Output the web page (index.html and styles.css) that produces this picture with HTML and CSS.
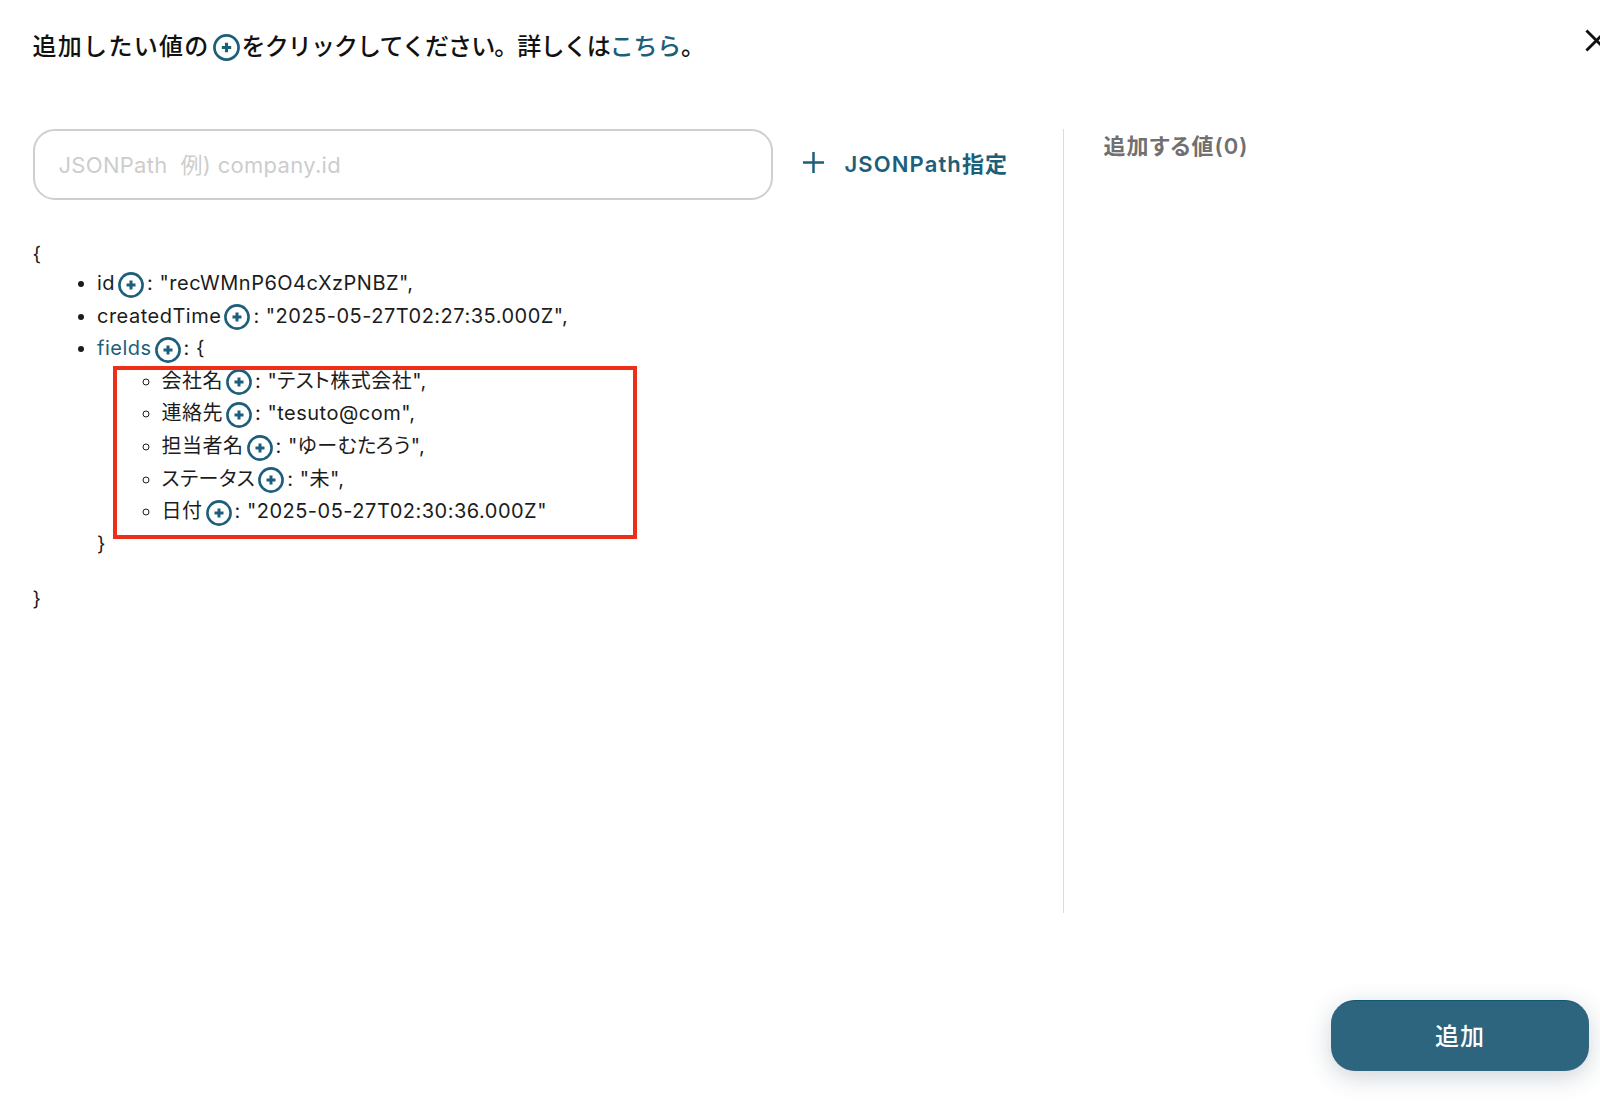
FILE: index.html
```html
<!DOCTYPE html>
<html lang="ja">
<head>
<meta charset="utf-8">
<title>JSONPath</title>
<link rel="stylesheet" href="styles.css">
</head>
<body>
<svg class="defs" width="0" height="0" aria-hidden="true"><symbol id="add" viewBox="0 0 26 26"><circle cx="13" cy="13" r="11.6" fill="none" stroke="currentColor" stroke-width="2.6"/><path d="M13 8.500v9M8.500 13h9" fill="none" stroke="currentColor" stroke-width="3"/></symbol></svg>
<div class="modal">
  <header class="head">
    <h1 class="title"><span class="title-lead">追加したい値の</span><svg class="add add-title"><use href="#add"/></svg><span class="title-rest">をクリックしてください。詳しくは<a class="link title-link" href="#">こちら</a>。</span></h1>
    <svg class="close" viewBox="0 0 24 24"><path d="M1.500 1.500L22.500 22.500M22.500 1.500L1.500 22.500" fill="none" stroke="#111" stroke-width="3"/></svg>
  </header>
  <main class="body">
    <section class="left">
      <div class="search">
        <div class="input">JSONPath&nbsp; 例) company.id</div>
        <a class="path-btn" href="#"><svg class="plus" viewBox="0 0 24 24"><path d="M12 1v22M1 12h22" fill="none" stroke="currentColor" stroke-width="2.600"/></svg><span>JSONPath指定</span></a>
      </div>
      <div class="tree">
        <div class="brace">{</div>
        <ul class="outer">
          <li>id<svg class="add"><use href="#add"/></svg>: "recWMnP6O4cXzPNBZ",</li>
          <li>createdTime<svg class="add"><use href="#add"/></svg>: "2025-05-27T02:27:35.000Z",</li>
          <li><span class="link">fields</span><svg class="add"><use href="#add"/></svg>: {
            <ul class="inner">
              <li>会社名<svg class="add"><use href="#add"/></svg>: "テスト株式会社",</li>
              <li>連絡先<svg class="add"><use href="#add"/></svg>: "tesuto@com",</li>
              <li>担当者名<svg class="add"><use href="#add"/></svg>: "ゆーむたろう",</li>
              <li>ステータス<svg class="add"><use href="#add"/></svg>: "未",</li>
              <li>日付<svg class="add"><use href="#add"/></svg>: "2025-05-27T02:30:36.000Z"</li>
            </ul>
            <div class="close-inner">}</div>
          </li>
        </ul>
        <div class="brace-end">}</div>
        <div class="highlight"></div>
      </div>
    </section>
    <aside class="right">
      <h2 class="count">追加する値(0)</h2>
    </aside>
  </main>
  <footer class="foot">
    <button class="submit" type="button">追加</button>
  </footer>
</div>
</body>
</html>
```

FILE: styles.css
```css
* { box-sizing: border-box; }
html, body { margin: 0; height: 100%; overflow: hidden; background: #fff; }
body { font-family: Inter, "Noto Sans CJK JP", sans-serif; color: #1c1c1c; font-feature-settings: "palt"; }
.defs { position: absolute; }
.modal { display: flex; flex-direction: column; height: 1108px; padding: 0 11px 37px 32.500px; position: relative; }
.head { height: 129px; padding-top: 29px; }
.title { margin: 0; font-size: 24px; font-weight: 500; line-height: 36px; color: #111; display: flex; align-items: center; font-feature-settings: normal; }
.title-lead { letter-spacing: 1.300px; }
.title-rest { letter-spacing: -0.900px; }
.title-link { letter-spacing: -0.300px; }
.link { color: #1d5f7b; text-decoration: none; }
.add { width: 26px; height: 26px; color: #1d5f7b; display: inline-block; vertical-align: middle; margin: 0 3px 0 3px; position: relative; }
.add-title { width: 27px; height: 27px; margin: 0 2px 0 3px; }
.close { position: absolute; left: 1585px; top: 29px; width: 23px; height: 23px; }
.body { display: flex; height: 784px; }
.left { width: 1030px; padding-right: 40px; }
.search { display: flex; align-items: center; }
.input { flex: none; width: 740px; height: 71px; border: 2px solid #cfcfcf; border-radius: 22px; padding: 0 24px 4px; display: flex; align-items: center; color: #cdcdcd; font-size: 22px; letter-spacing: 0.300px; }
.path-btn { display: flex; align-items: center; margin-left: 29px; padding-bottom: 5px; color: #1d5f7b; font-size: 22px; font-weight: 600; letter-spacing: 1.100px; text-decoration: none; white-space: nowrap; }
.plus { width: 23px; height: 23px; margin-right: 20px; }
.tree { position: relative; margin-top: 38px; font-size: 20px; line-height: 32.600px; letter-spacing: 0.500px; }
.brace { height: 29px; }
.brace-end { margin-top: 23px; }
.outer { list-style: disc; margin: 0; padding: 0 0 0 64.500px; }
.inner { list-style: circle; margin: 0; padding: 0 0 0 64.500px; }
.close-inner { height: 32.600px; }
.highlight { position: absolute; left: 80px; top: 128px; width: 524px; height: 173px; border: 4px solid #ee2f17; pointer-events: none; }
.right { flex: 1; border-left: 1px solid #dcdcdc; padding: 0 0 0 40px; }
.count { margin: 0; font-size: 22px; font-weight: 600; line-height: 34px; letter-spacing: 1px; color: #707070; }
.foot { flex: 1; display: flex; justify-content: flex-end; align-items: flex-end; }
.submit { width: 258px; height: 71px; padding: 0 0 4px; border: 0; border-top: 1px solid #0f5673; border-radius: 24px; background: #2d657f; color: #fff; font: 500 24px Inter, "Noto Sans CJK JP", sans-serif; letter-spacing: 1px; box-shadow: 0 6px 24px rgba(30, 60, 80, .22); }
```
